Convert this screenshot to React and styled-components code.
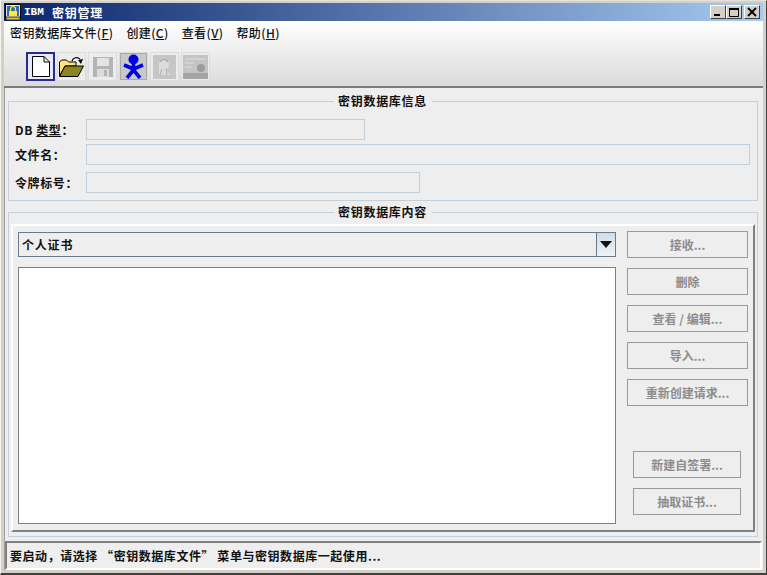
import React from "react";
import styled, { createGlobalStyle } from "styled-components";

const GlobalStyle = createGlobalStyle`
  html, body { margin: 0; padding: 0; background: #d4d0c8; }
  * { box-sizing: border-box; }
`;

const FONT = `"Noto Sans CJK SC", "Liberation Sans", sans-serif`;

const Frame = styled.div`
  width: 767px;
  height: 575px;
  display: flex;
  flex-direction: column;
  padding: 2px 3px 3px 3px;
  background: #d4d0c8;
  border-right: 1px solid #404040;
  border-bottom: 2px solid #404040;
  border-top: 1px solid #e4e2dc;
  border-left: 1px solid #f4f4f0;
  font-family: ${FONT};
  font-size: 12px;
  font-weight: 500;
  color: #111;
  overflow: hidden;
`;

const TitleBar = styled.div`
  height: 18px;
  flex: none;
  display: flex;
  align-items: center;
  padding: 0 3px 0 1px;
  background: linear-gradient(90deg, #0a246a 0%, #a6caf0 100%);
  color: #fff;
  font-weight: 700;
`;

const TitleBrand = styled.span`
  width: 28px;
  margin-left: 3px;
  font-family: "Liberation Mono", monospace;
  font-size: 11px;
`;

const TitleText = styled.span`
  flex: 1;
  letter-spacing: 0.75px;
`;

const WinButtons = styled.div`
  display: flex;
`;

const WinButton = styled.div`
  width: 16px;
  height: 14px;
  margin-left: ${(p) => (p.$gap ? "2px" : "0")};
  background: #d4d0c8;
  border: 1px solid;
  border-color: #fff #404040 #404040 #fff;
  display: flex;
  align-items: center;
  justify-content: center;
`;

const MenuBar = styled.div`
  height: 23px;
  flex: none;
  display: flex;
  align-items: center;
  gap: 13px;
  padding-left: 6px;
  background: linear-gradient(#ffffff, #f2f2f2);
  letter-spacing: 0.4px;
`;

const ToolBar = styled.div`
  height: 44px;
  flex: none;
  display: flex;
  align-items: flex-start;
  gap: 2px;
  padding: 8px 0 0 22px;
  background: linear-gradient(#f2f2f2, #dadada);
  border-bottom: 2px solid #7c7c7c;
`;

const ToolButton = styled.div`
  width: 29px;
  height: 29px;
  display: flex;
  align-items: center;
  justify-content: center;
  border: ${(p) => (p.$selected ? "2px solid #2a2a8c" : "1px solid #dcdcdc")};
  background: ${(p) => (p.$selected ? "#e8e8fa" : p.$pressed ? "#c8c8c8" : "#ececec")};
  box-shadow: ${(p) => (p.$pressed ? "0 0 0 1px #a8a8a8 inset" : "none")};
`;

const Body = styled.div`
  flex: 1;
  display: flex;
  flex-direction: column;
  min-height: 0;
  background: #eeeeee;
  border-left: 1px solid #a0a0a0;
  padding: 6px 5px 0 3px;
`;

const Group = styled.fieldset`
  margin: ${(p) => p.$top || 0}px 0 0;
  padding: ${(p) => p.$pad};
  height: ${(p) => p.$height}px;
  flex: none;
  border: 1px solid #c2d0dc;
  min-width: 0;
`;

const GroupTitle = styled.legend`
  margin: 0 auto;
  padding: 0 5px 0 4px;
  height: 14px;
  line-height: 14px;
  letter-spacing: 0.7px;
  font-weight: 700;
  color: #111;
`;

const InfoGrid = styled.div`
  display: flex;
  flex-direction: column;
`;

const InfoRow = styled.div`
  display: flex;
  align-items: center;
  height: 21px;
  margin-bottom: ${(p) => p.$after}px;
`;

const Label = styled.span`
  width: 71px;
  flex: none;
  letter-spacing: 0.6px;
  font-weight: 700;
  color: #111;
`;

const Field = styled.div`
  width: ${(p) => p.$width};
  height: 21px;
  background: #eeeeee;
  border: 1px solid #bfcfdc;
`;

const Raised = styled.div`
  height: 308px;
  margin-top: 5px;
  display: flex;
  gap: 11px;
  padding: 6px 5px 6px 5px;
  border: 2px solid;
  border-color: #ffffff #808080 #808080 #ffffff;
`;

const LeftColumn = styled.div`
  width: 598px;
  flex: none;
  display: flex;
  flex-direction: column;
  gap: 10px;
`;

const Combo = styled.div`
  height: 25px;
  flex: none;
  display: flex;
  align-items: center;
  border: 1px solid #6a7a8e;
  background: #eeeeee;
  padding-left: 3px;
  letter-spacing: 0.8px;
  font-weight: 700;
`;

const ComboText = styled.span`
  flex: 1;
`;

const ComboArrow = styled.div`
  width: 19px;
  height: 23px;
  display: flex;
  align-items: center;
  justify-content: center;
  border-left: 1px solid #6a7a8e;
  background: linear-gradient(#cfdcea, #eef2f6);
`;

const ListBox = styled.div`
  flex: 1;
  background: #fff;
  border: 1px solid #808080;
`;

const Side = styled.div`
  flex: 1;
  display: flex;
  flex-direction: column;
  margin-top: -1px;
`;

const ActionGroup = styled.div`
  display: flex;
  flex-direction: column;
  gap: 10px;
  padding: ${(p) => p.$pad};
  margin-top: ${(p) => p.$top || 0}px;
`;

const ActionButton = styled.div`
  height: 27px;
  display: flex;
  align-items: center;
  justify-content: center;
  background: #eeeeee;
  border: 1px solid #9a9a9a;
  color: #8c8c8c;
  font-weight: 700;
`;

const StatusBar = styled.div`
  height: 30px;
  margin: 4px -4px 0 -3px;
  display: flex;
  align-items: center;
  padding-left: 3px;
  border: 2px solid;
  border-color: #808080 #ffffff #ffffff #808080;
  background: #eeeeee;
  letter-spacing: 0.55px;
  font-weight: 700;
  color: #111;
`;

function AppIcon() {
  return (
    <svg width="16" height="16" viewBox="0 0 16 16">
      <rect x="0.5" y="0.5" width="15" height="13" fill="#e8e8e8" stroke="#000" />
      <rect x="2" y="2" width="12" height="10" fill="#2a6ca8" />
      <path d="M5.5 7V5a2.5 2.5 0 0 1 5 0V7" fill="none" stroke="#ffe840" strokeWidth="1.2" />
      <rect x="4" y="7" width="8" height="5" fill="#ffe840" />
      <rect x="1" y="13" width="14" height="3" fill="#e0c020" stroke="#000" strokeWidth="0.7" />
    </svg>
  );
}

function DocIcon() {
  return (
    <svg width="18" height="21" viewBox="0 0 18 21">
      <path d="M0.5 0.5H12L17.5 6V20.5H0.5Z" fill="#fff" stroke="#000" />
      <path d="M12 0.5V6H17.5" fill="none" stroke="#000" />
    </svg>
  );
}

function FolderIcon() {
  return (
    <svg width="25" height="21" viewBox="0 0 25 21">
      <path d="M13 5C14 1.5 18 0.5 21 3" fill="none" stroke="#000" strokeWidth="1.2" />
      <path d="M19 4L24 3L22 8Z" fill="#000" />
      <path d="M0.5 20V6L2.5 4H7.5L9.5 6H17V10H6L0.5 20Z" fill="#ffe27a" stroke="#000" />
      <path d="M0.5 20.5L6 10H24.5L19 20.5Z" fill="#8c8420" stroke="#000" />
    </svg>
  );
}

function SaveIcon() {
  return (
    <svg width="20" height="20" viewBox="0 0 20 20">
      <rect width="20" height="20" fill="#b4b4b4" />
      <rect x="4" y="1" width="12" height="8" fill="#e4e4e4" />
      <rect x="4" y="12" width="12" height="8" fill="#dcdcdc" />
      <rect x="11" y="13" width="3" height="6" fill="#b4b4b4" />
    </svg>
  );
}

function PersonIcon() {
  return (
    <svg width="21" height="25" viewBox="0 0 21 25">
      <circle cx="10.5" cy="5.5" r="5" fill="#0000e0" />
      <path d="M1 11L10.5 15L20 11M10.5 10V17M10.5 16L4 24M10.5 16L17 24" fill="none" stroke="#0000e0" strokeWidth="3.6" />
    </svg>
  );
}

function PortraitIcon() {
  return (
    <svg width="23" height="24" viewBox="0 0 23 24">
      <rect width="23" height="24" fill="#c6c6c6" />
      <path d="M6 20V8a5 5 0 0 1 10 0c0 4-1 5-3 6l4 6Z" fill="#dcdcdc" />
      <path d="M7 7c1-3 6-4 8 0" fill="none" stroke="#a8a8a8" strokeWidth="1.5" />
      <path d="M9 14l-2 6M13 14l1 6" stroke="#ababab" />
    </svg>
  );
}

function CertIcon() {
  return (
    <svg width="25" height="24" viewBox="0 0 25 24">
      <rect width="25" height="24" fill="#c4c4c4" />
      <path d="M2 4H23M2 8H11M2 12H9" stroke="#e0e0e0" />
      <circle cx="18" cy="13" r="4" fill="#9c9c9c" />
      <rect y="18" width="25" height="6" fill="#a4a4a4" />
    </svg>
  );
}

const actions = ["接收...", "删除", "查看 / 编辑...", "导入...", "重新创建请求..."];
const lowerActions = ["新建自签署...", "抽取证书..."];

export default function App() {
  return (
    <>
      <GlobalStyle />
      <Frame>
        <TitleBar>
          <AppIcon />
          <TitleBrand>IBM</TitleBrand>
          <TitleText>密钥管理</TitleText>
          <WinButtons>
            <WinButton>
              <svg width="10" height="10" viewBox="0 0 10 10"><rect x="1" y="7" width="6" height="2" fill="#000" /></svg>
            </WinButton>
            <WinButton>
              <svg width="10" height="10" viewBox="0 0 10 10"><path d="M0.5 1.5H9.5V9.5H0.5Z" fill="none" stroke="#000" /><rect y="1" width="10" height="2" fill="#000" /></svg>
            </WinButton>
            <WinButton $gap>
              <svg width="10" height="10" viewBox="0 0 10 10"><path d="M1 1L9 9M9 1L1 9" stroke="#000" strokeWidth="1.8" /></svg>
            </WinButton>
          </WinButtons>
        </TitleBar>
        <MenuBar>
          <span>密钥数据库文件(<u>F</u>)</span>
          <span>创建(<u>C</u>)</span>
          <span>查看(<u>V</u>)</span>
          <span>帮助(<u>H</u>)</span>
        </MenuBar>
        <ToolBar>
          <ToolButton $selected><DocIcon /></ToolButton>
          <ToolButton><FolderIcon /></ToolButton>
          <ToolButton><SaveIcon /></ToolButton>
          <ToolButton $pressed><PersonIcon /></ToolButton>
          <ToolButton><PortraitIcon /></ToolButton>
          <ToolButton><CertIcon /></ToolButton>
        </ToolBar>
        <Body>
          <Group $height={107} $pad="11px 6px 0 6px">
            <GroupTitle>密钥数据库信息</GroupTitle>
            <InfoGrid>
              <InfoRow $after={4}>
                <Label>DB <u>类型</u>：</Label>
                <Field $width="279px" />
              </InfoRow>
              <InfoRow $after={7}>
                <Label>文件名：</Label>
                <Field $width="664px" />
              </InfoRow>
              <InfoRow $after={0}>
                <Label>令牌标号：</Label>
                <Field $width="334px" />
              </InfoRow>
            </InfoGrid>
          </Group>
          <Group $height={332} $top={4} $pad="0 2px">
            <GroupTitle>密钥数据库内容</GroupTitle>
            <Raised>
              <LeftColumn>
                <Combo>
                  <ComboText>个人证书</ComboText>
                  <ComboArrow>
                    <svg width="12" height="7" viewBox="0 0 12 7"><path d="M0 0H12L6 7Z" fill="#111" /></svg>
                  </ComboArrow>
                </Combo>
                <ListBox />
              </LeftColumn>
              <Side>
                <ActionGroup $pad="0">
                  {actions.map((a) => <ActionButton key={a}>{a}</ActionButton>)}
                </ActionGroup>
                <ActionGroup $pad="0 7px 0 6px" $top={45}>
                  {lowerActions.map((a) => <ActionButton key={a}>{a}</ActionButton>)}
                </ActionGroup>
              </Side>
            </Raised>
          </Group>
          <StatusBar>要启动，请选择 “密钥数据库文件” 菜单与密钥数据库一起使用...</StatusBar>
        </Body>
      </Frame>
    </>
  );
}
